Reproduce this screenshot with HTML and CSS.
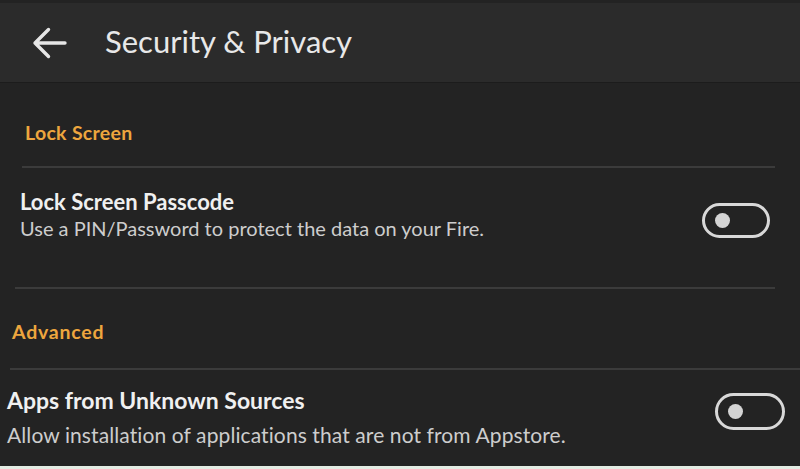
FILE: index.html
```html
<!DOCTYPE html>
<html>
<head>
<meta charset="utf-8">
<link rel="stylesheet" href="styles.css">
</head>
<body>
<div class="screen">
  <header class="appbar">
    <svg class="back" width="35" height="32" viewBox="0 0 35 32">
      <path d="M33 16H3M16.5 2.5L3 16l13.5 13.5" fill="none" stroke="#e6e6e6" stroke-width="3.4" stroke-linecap="round" stroke-linejoin="round"/>
    </svg>
    <h1 class="title">Security &amp; Privacy</h1>
  </header>
  <main class="list">
    <section class="group g1">
      <div class="cat">Lock Screen</div>
      <div class="divider"></div>
      <div class="row">
        <div class="texts">
          <div class="primary">Lock Screen Passcode</div>
          <div class="secondary">Use a PIN/Password to protect the data on your Fire.</div>
        </div>
        <div class="toggle"><span class="knob"></span></div>
      </div>
      <div class="divider d2"></div>
    </section>
    <section class="group g2">
      <div class="cat">Advanced</div>
      <div class="divider"></div>
      <div class="row">
        <div class="texts">
          <div class="primary">Apps from Unknown Sources</div>
          <div class="secondary">Allow installation of applications that are not from Appstore.</div>
        </div>
        <div class="toggle"><span class="knob"></span></div>
      </div>
    </section>
  </main>
  <div class="bottom-edge"></div>
</div>
</body>
</html>
```
FILE: styles.css
```css
html, body {
  margin: 0;
  padding: 0;
  background: #1b1b1b;
}
.screen {
  width: 800px;
  height: 469px;
  display: flex;
  flex-direction: column;
  background: #232323;
  font-family: "Lato", "Open Sans", sans-serif;
  overflow: hidden;
}
.appbar {
  margin-top: 3px;
  height: 79px;
  flex: none;
  background: #2b2b2b;
  display: flex;
  align-items: center;
  padding-left: 32px;
  gap: 38px;
  border-bottom: 1px solid #1c1c1c;
}
.title {
  margin: 0 0 3px 0;
  font-size: 31px;
  font-weight: 400;
  color: #e8e8e8;
}
.list {
  flex: 1;
  display: flex;
  flex-direction: column;
}
.cat {
  color: #eda63e;
  font-weight: 700;
  font-size: 19.5px;
  line-height: 20px;
}
.divider {
  height: 2px;
  background: #3b3b3b;
}
.row {
  display: flex;
  align-items: flex-start;
  justify-content: space-between;
}
.primary {
  color: #f0f0f0;
  font-weight: 700;
}
.secondary {
  color: #cdcdcd;
}
.toggle {
  border: 3px solid #d8d8d8;
  border-radius: 20px;
  display: flex;
  align-items: center;
  padding-left: 9.5px;
  box-sizing: border-box;
}
.knob {
  width: 15px;
  height: 15px;
  border-radius: 50%;
  background: #d4d4d4;
}

/* group 1 */
.g1 {
  padding-left: 22px;
  padding-right: 25px;
}
.g1 .cat {
  padding: 40px 0 23px 3px;
  letter-spacing: 0.3px;
}
.g1 .row {
  padding-top: 20.5px;
  height: 119px;
  box-sizing: border-box;
}
.g1 .texts {
  margin-left: -2px;
}
.g1 .primary {
  font-size: 22px;
  line-height: 26px;
}
.g1 .secondary {
  font-size: 20px;
  line-height: 22px;
  margin-top: 2px;
}
.g1 .toggle {
  width: 68px;
  height: 35px;
  margin-right: 5px;
  margin-top: 14.5px;
}
.g1 .d2 {
  margin-left: -7px;
}

/* group 2 */
.g2 {
  padding-left: 10px;
}
.g2 .cat {
  padding: 32.5px 0 26.5px 2px;
  letter-spacing: 0.8px;
}
.g2 .row {
  padding-top: 17px;
}
.g2 .texts {
  margin-left: -3px;
}
.g2 .primary {
  font-size: 23px;
  line-height: 27px;
}
.g2 .secondary {
  font-size: 21px;
  line-height: 23px;
  margin-top: 9px;
  letter-spacing: 0.1px;
}
.g2 .toggle {
  width: 70px;
  height: 37px;
  margin-right: 15px;
  margin-top: 6px;
}
.bottom-edge {
  height: 3px;
  flex: none;
  background: #e3ece3;
}
```
